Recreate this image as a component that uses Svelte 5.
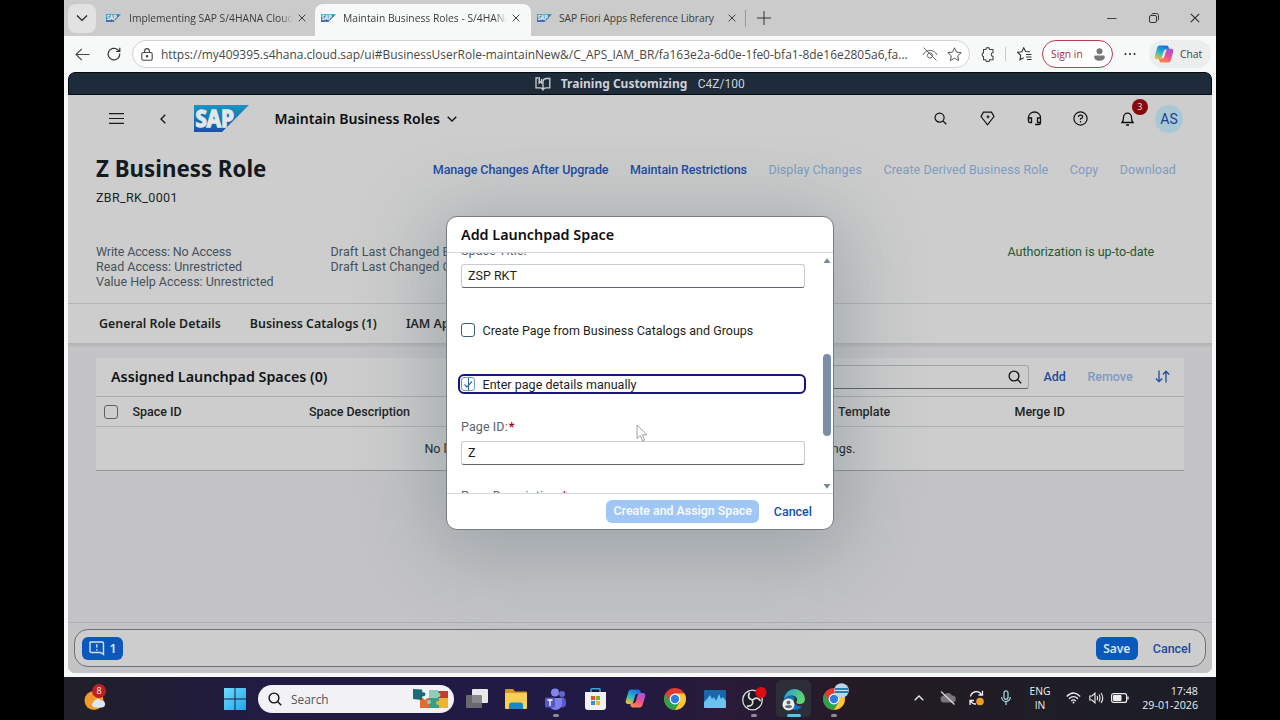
<script>
  const browserTabs = [
    { title: 'Implementing SAP S/4HANA Cloud', cls: 'first' },
    { title: 'Maintain Business Roles - S/4HANA', cls: 'active' },
    { title: 'SAP Fiori Apps Reference Library', cls: 'last' }
  ];
  const access = ['Write Access: No Access', 'Read Access: Unrestricted', 'Value Help Access: Unrestricted'];
  const links = [
    { t: 'Manage Changes After Upgrade', on: true },
    { t: 'Maintain Restrictions', on: true },
    { t: 'Display Changes', on: false },
    { t: 'Create Derived Business Role', on: false },
    { t: 'Copy', on: false },
    { t: 'Download', on: false }
  ];
</script>

{#snippet sapMark(w, h, id)}
  <svg width={w} height={h} viewBox="0 0 55 27" aria-label="SAP">
    <defs>
      <linearGradient id={id} x1="0" y1="0" x2="0" y2="1">
        <stop offset="0" stop-color="#1796c4" /><stop offset="1" stop-color="#1b52a8" />
      </linearGradient>
    </defs>
    <path d="M0 0H55L28 27H0Z" fill="url(#{id})" />
    <text class="saptext" x="1.500" y="21.500" textLength="38.500" lengthAdjust="spacingAndGlyphs">SAP</text>
  </svg>
{/snippet}

{#snippet cross(s)}
  <svg width={s} height={s} viewBox="0 0 10 10" fill="none" stroke="#2b2b2b" stroke-width="1.1"><path d="M.8.8l8.4 8.4M9.2.8L.8 9.2" /></svg>
{/snippet}

{#snippet lens(s, c, w)}
  <svg width={s} height={s} viewBox="0 0 14 14" fill="none" stroke={c} stroke-width={w}><circle cx="6" cy="6" r="4.9" /><path d="M9.6 9.6L13.2 13.2" /></svg>
{/snippet}

{#snippet chrome()}
  <svg width="22" height="22" viewBox="0 0 22 22">
    <circle cx="11" cy="11" r="11" fill="#e33b2e" />
    <path d="M1.5 5.5A11 11 0 0 0 11 22L15.8 13.8 11 11 6.2 13.8Z" fill="#2ba24c" />
    <path d="M11 22A11 11 0 0 0 20.5 5.5H11L15.8 13.8Z" fill="#fcc934" />
    <circle cx="11" cy="11" r="5.4" fill="#fff" /><circle cx="11" cy="11" r="4.2" fill="#2f7de1" />
  </svg>
{/snippet}

{#snippet copilot(s, id)}
  <svg width={s} height={s} viewBox="0 0 20 20">
    <defs>
      <linearGradient id="{id}a" x1=".6" y1="0" x2=".2" y2="1"><stop offset="0" stop-color="#1a6fe0" /><stop offset=".5" stop-color="#28b9c9" /><stop offset="1" stop-color="#f2c230" /></linearGradient>
      <linearGradient id="{id}b" x1=".8" y1="0" x2=".3" y2="1"><stop offset="0" stop-color="#9a55e8" /><stop offset=".5" stop-color="#ee4f8d" /><stop offset="1" stop-color="#fb8a45" /></linearGradient>
    </defs>
    <path d="M6 1.5h6.500c1.300 0 1.900.8 2.200 1.800l.6 2.200H12c-1.300 0-1.900.7-2.300 1.900L7.800 13.500c-.4 1.200-1 1.700-2.300 1.700H3C1.200 15.200.2 14 .8 12L3.200 3.800C3.700 2.200 4.600 1.500 6 1.500Z" fill="url(#{id}a)" />
    <path d="M14 18.500H7.500c-1.300 0-1.900-.8-2.200-1.800l-.6-2.200H8c1.300 0 1.900-.7 2.300-1.900l1.900-6.100c.4-1.200 1-1.700 2.300-1.700H17c1.800 0 2.800 1.200 2.200 3.200l-2.400 8.200c-.5 1.600-1.400 2.300-2.800 2.300Z" fill="url(#{id}b)" />
  </svg>
{/snippet}

<div class="screen">
  <div class="window">
    <div class="tabstrip">
      <div class="tabmenu"><svg width="12" height="8" viewBox="0 0 12 8" fill="none" stroke="#222" stroke-width="1.2"><path d="M1 1.500l5 5 5-5" /></svg></div>
      {#each browserTabs as tab, i}
        <div class="btab {tab.cls}">
          <span class="fav">{@render sapMark(15, 8, 'fav' + i)}</span>
          <span class="btitle">{tab.title}</span>
          {@render cross(8)}
        </div>
      {/each}
      <span class="sep"></span>
      <svg class="plus" width="14" height="14" viewBox="0 0 14 14" stroke="#333" stroke-width="1"><path d="M7 0v14M0 7h14" /></svg>
      <div class="winctl">
        <svg width="10" height="10" viewBox="0 0 10 10" stroke="#444"><path d="M0 5.500h9.500" /></svg>
        <svg width="10" height="10" viewBox="0 0 10 10" fill="none" stroke="#333"><rect x=".5" y="2.500" width="7" height="7" rx="1.500" /><path d="M2.500 1.200Q3 .5 4 .5H7.500Q9.500.5 9.500 2.500V6Q9.500 7 8.800 7.500" /></svg>
        {@render cross(10)}
      </div>
    </div>

    <div class="toolbar">
      <svg class="back" width="15" height="13" viewBox="0 0 15 13" fill="none" stroke="#444" stroke-width="1.100"><path d="M14.500 6.500H1M6.800.8L1 6.500l5.800 5.700" /></svg>
      <svg class="reload" width="14" height="14" viewBox="0 0 14 14" fill="none" stroke="#333" stroke-width="1.200"><path d="M12.700 6.500A5.800 5.800 0 1 1 10.800 2.800L12.600 4.400M12.800.8V4.500H9" /></svg>
      <div class="url">
        <svg width="12" height="13" viewBox="0 0 12 13" fill="none" stroke="#444" stroke-width="1.100"><rect x=".8" y="4.500" width="10.400" height="7.700" rx="1.500" /><path d="M3.600 4.300V3A2.400 2.400 0 0 1 8.400 3V4.300" /><circle cx="6" cy="8.300" r=".7" fill="#444" /></svg>
        <span class="address">https://my409395.s4hana.cloud.sap/ui#BusinessUserRole-maintainNew&amp;/C_APS_IAM_BR/fa163e2a-6d0e-1fe0-bfa1-8de16e2805a6,fa...</span>
        <svg width="16" height="14" viewBox="0 0 16 14" fill="none" stroke="#666" stroke-width="1"><path d="M1 8Q3 3.500 8 3.500T15 8" /><circle cx="8" cy="8.500" r="2.600" /><path d="M1.500.5L14.500 13.500" /></svg>
        <svg width="15" height="14" viewBox="0 0 15 14" fill="none" stroke="#555" stroke-width="1"><path d="M7.500.8l2 4.300 4.700.6-3.500 3.200.9 4.600-4.100-2.300-4.100 2.300.9-4.600L.8 5.700l4.700-.6z" /></svg>
      </div>
      <svg class="puzzle" width="14" height="15" viewBox="0 0 14 15" fill="none" stroke="#444" stroke-width="1.100"><path d="M2.500 2.500H4.800A1.900 1.900 0 0 1 8.600 2.500H12V5.800A1.800 1.800 0 0 0 12 9.400V12.800H8.600A1.900 1.900 0 0 1 4.800 12.800H2.500V9.600A1.900 1.900 0 0 1 2.500 5.900Z" /></svg>
      <span class="sep light"></span>
      <svg class="favs" width="15" height="14" viewBox="0 0 15 14" fill="none" stroke="#333" stroke-width="1.100"><path d="M13 4.800L8.600 4.500 6.700.8 4.800 4.700.7 5.300l3 3L3 12.700l3.700-2M9 7.500h5.500M9 10h5.500M10 12.500h4.500" /></svg>
      <div class="signin">Sign in<svg width="11" height="13" viewBox="0 0 11 13" fill="#777"><circle cx="5.500" cy="3.200" r="3" /><path d="M1.500 7.500h8a1.300 1.300 0 0 1 1.300 1.300C10.800 11.500 8.500 12.800 5.500 12.800S.2 11.500.2 8.800A1.300 1.300 0 0 1 1.500 7.500Z" /></svg></div>
      <svg class="dots" width="12" height="4" viewBox="0 0 12 4" fill="#222"><circle cx="1.500" cy="2" r="1" /><circle cx="6" cy="2" r="1" /><circle cx="10.500" cy="2" r="1" /></svg>
      <div class="chat">{@render copilot(20, 'tb')}Chat</div>
    </div>

    <div class="page">
      <div class="banner">
        <svg width="16" height="14" viewBox="0 0 16 14" fill="none" stroke="#c9ced3" stroke-width="1.300"><path d="M3 1H1V10.800H5.500Q7.300 10.800 8 12.800Q8.800 10.800 11 10.800H14.800V1.500H11.500Q8.300 1.500 8 4.500V12" /><path d="M4.200 0V6L5.400 5 6.600 6V2" stroke-width="1.500" /></svg>
        <b>Training Customizing</b><span>C4Z/100</span>
      </div>

      <div class="shell">
        <svg class="menu" width="15" height="11" viewBox="0 0 15 11" stroke="#1a1d20" stroke-width="1.200"><path d="M0 .7h15M0 5.500h15M0 10.300h15" /></svg>
        <svg class="prev" width="6" height="10" viewBox="0 0 6 10" fill="none" stroke="#111" stroke-width="1.300"><path d="M5.300.7L1 5l4.300 4.300" /></svg>
        {@render sapMark(55, 27, 'logo')}
        <span class="apptitle">Maintain Business Roles</span>
        <svg class="caret" width="10" height="6" viewBox="0 0 10 6" fill="none" stroke="#111" stroke-width="1.300"><path d="M.7.7L5 5 9.300.7" /></svg>
        <div class="actions">
          <span>{@render lens(13, '#111', 1.3)}</span>
          <span><svg width="15" height="15" viewBox="0 0 15 15" fill="none" stroke="#111" stroke-width="1.200"><path d="M3.500 1.200H11.500L14 5.500 7.500 13.800 1 5.500Z" /><path d="M8 3.500l.6 1.700 1.600.6-1.600.6-.6 1.500-.6-1.500-1.600-.6 1.600-.6z" fill="#111" stroke="none" /></svg></span>
          <span><svg width="15" height="15" viewBox="0 0 15 15" fill="none" stroke="#111" stroke-width="1.300"><path d="M1.500 9V6.500A6 5.500 0 0 1 13.500 6.500V11.500Q13.500 13.500 11.500 13.500H8" /><path d="M1.500 7H4.500V11.500H3Q1.500 11.500 1.500 10ZM13.500 7H10.500V11.500H13.500" /></svg></span>
          <span><svg width="15" height="15" viewBox="0 0 15 15" fill="none" stroke="#111" stroke-width="1.200"><circle cx="7.500" cy="7.500" r="6.600" /><path d="M5.400 6Q5.400 4.100 7.500 4.100T9.600 5.900Q9.600 7.300 7.500 7.700V8.800" /><path d="M7.500 10v1.500" /></svg></span>
          <span class="bell"><svg width="13" height="14" viewBox="0 0 13 14" fill="none" stroke="#111" stroke-width="1.300"><path d="M1 10.500Q2.500 9 2.500 5.500A4 4.300 0 0 1 10.500 5.500Q10.500 9 12 10.500Z" /><path d="M5 13h3" /></svg><i>3</i></span>
        </div>
        <div class="avatar">AS</div>
      </div>

      <div class="objhead">
        <div class="toprow">
          <h1>Z Business Role</h1>
          <div class="links">{#each links as l}<span class:off={!l.on}>{l.t}</span>{/each}</div>
        </div>
        <div class="objid">ZBR_RK_0001</div>
        <div class="facts">
          <div class="access">{#each access as a}<div>{a}</div>{/each}</div>
          <div class="draft"><div>Draft Last Changed By:</div><div>Draft Last Changed On:</div></div>
          <div class="auth">Authorization is up-to-date</div>
        </div>
      </div>

      <div class="anchors"><span>General Role Details</span><span>Business Catalogs (1)</span><span>IAM Apps</span></div>

      <div class="content">
        <div class="table">
          <div class="tbar">
            <h2>Assigned Launchpad Spaces (0)</h2>
            <div class="search">{@render lens(14, '#111', 1.3)}</div>
            <span class="add">Add</span><span class="remove">Remove</span>
            <svg width="15" height="13" viewBox="0 0 15 13" fill="none" stroke="#1d4ba3" stroke-width="1.300"><path d="M4 .5V11.500M.8 8.500L4 11.700 7.200 8.500M11 12.500V1.500M7.900 4.500L11 1.300 14.200 4.500" /></svg>
          </div>
          <div class="thead"><i class="box"></i><span>Space ID</span><span>Space Description</span><span>Template</span><span>Merge ID</span></div>
          <div class="empty"><span>No launchpad spaces assigned. Add spaces or adjust filter or search settings.</span></div>
        </div>
      </div>

      <div class="footwrap">
        <div class="footer">
          <div class="msg"><svg width="16" height="15" viewBox="0 0 16 15" fill="none" stroke="#d5e2f2" stroke-width="1.400"><path d="M1.700 1H13A1.500 1.500 0 0 1 14.500 2.500V13.500L11.500 11.500H2.500A1.500 1.500 0 0 1 1 10V2A1 1 0 0 1 1.700 1Z" /><path d="M7.800 3.300v3.200M7.800 8v1.500" /></svg>1</div>
          <div class="save">Save</div><span class="fcancel">Cancel</span>
        </div>
      </div>

      <div class="dialog">
        <header>Add Launchpad Space</header>
        <div class="body">
          <div class="form">
            <label class="l1" for="title">Space Title:</label>
            <div class="input">ZSP RKT</div>
            <div class="check"><i class="box blue"></i>Create Page from Business Catalogs and Groups</div>
            <div class="check focus"><i class="box blue"><svg width="12" height="12" viewBox="0 0 12 12" fill="none" stroke="#2a66b3" stroke-width="1.200"><path d="M2.500 6.500L5 9 10 3.500" /><path d="M6.500-1V13" stroke-width="1" /></svg></i>Enter page details manually</div>
            <label class="l2" for="pid">Page ID:<b>*</b></label>
            <div class="input">Z</div>
            <label class="l3" for="pd">Page Description:<b>*</b></label>
          </div>
          <div class="scroll">
            <svg width="8" height="6" viewBox="0 0 8 6" fill="#7588a0"><path d="M4 .3L7.500 5H.5Z" /></svg>
            <i></i>
            <svg width="8" height="6" viewBox="0 0 8 6" fill="#7588a0"><path d="M4 5.700L7.500 1H.5Z" /></svg>
          </div>
        </div>
        <footer><div class="create">Create and Assign Space</div><span>Cancel</span></footer>
      </div>
      <svg class="pointer" width="13" height="18" viewBox="0 0 13 18" fill="#fff" stroke="#888" stroke-width=".8"><path d="M1 1V14.500L4.300 11.400 6.500 16.800 8.600 16 6.400 10.800H11Z" /></svg>
    </div>
  </div>

  <div class="taskbar">
    <div class="weather"><svg width="24" height="26" viewBox="0 0 24 26"><circle cx="10" cy="14.500" r="9.500" fill="#f29a2a" /><path d="M10 21.500a3.300 3.300 0 0 1 0-6 4 4 0 0 1 7-1 3.500 3.500 0 0 1 1 7Z" fill="#dfe8f8" /></svg><i>8</i></div>
    <svg class="start" width="22" height="22" viewBox="0 0 22 22"><defs><linearGradient id="win" x1="0" y1="0" x2="1" y2="1"><stop offset="0" stop-color="#6fdcfb" /><stop offset="1" stop-color="#1fa4ec" /></linearGradient></defs><path fill="url(#win)" d="M0 0h10.500v10.500H0zM11.500 0H22v10.500H11.500zM0 11.500h10.500V22H0zM11.500 11.500H22V22H11.500z" /></svg>
    <div class="tsearch">
      {@render lens(14, '#111', 1.4)}<span>Search</span>
      <svg width="37" height="21" viewBox="0 0 37 21"><path d="M8 10h10v10H8z" fill="#e06b35" /><path d="M17 3h10v17H17z" fill="#3b9b8c" /><path d="M17 2h9v8h-9z" fill="#8fd0b4" /><path d="M27 3h9v9h-9z" fill="#c33e2a" /><path d="M27 10h9v10h-9z" fill="#edb431" /><path d="M1 1l9 .5.5 3a2 2 0 1 1 0 3.500L9.500 12 1 11z" fill="#1b6a78" /><circle cx="17" cy="14" r="2" fill="#8fd0b4" /><circle cx="26.500" cy="7" r="2" fill="#8fd0b4" /><circle cx="26" cy="15" r="2" fill="#edb431" /><circle cx="13" cy="10" r="1.800" fill="#f3f3f7" /></svg>
    </div>
    <div class="apps">
      <span><svg width="22" height="20" viewBox="0 0 22 20"><rect x="6" y="0" width="16" height="14" rx="1" fill="#e9e9ea" /><rect x="0" y="6" width="16" height="13" rx="1" fill="#777" opacity=".85" /></svg></span>
      <span><svg width="22" height="20" viewBox="0 0 22 20"><path d="M0 1Q0 0 1 0H8L10 2.500H21Q22 2.500 22 3.500V8H0Z" fill="#d9962a" /><rect x="0" y="4" width="22" height="16" rx="1" fill="#f8cf56" /><path d="M4 20V16Q4 13.500 6.500 13.500H15.500Q18 13.500 18 16V20Z" fill="#1687c9" /></svg></span>
      <span class="run"><svg width="22" height="22" viewBox="0 0 22 22"><circle cx="17" cy="6" r="3" fill="#6264d8" /><circle cx="10" cy="4.500" r="4" fill="#8286ee" /><rect x="13" y="9.500" width="8" height="10" rx="4" fill="#565ad0" /><path d="M4 10H17V16A6.500 6 0 0 1 4 16Z" fill="#7b80ee" /><rect x="0" y="9.500" width="10" height="10" rx="1.500" fill="#5457c4" /><path d="M2.500 12h5M5 12v6" stroke="#fff" stroke-width="1.300" /></svg></span>
      <span><svg width="21" height="22" viewBox="0 0 21 22"><path d="M6 5V1.500Q6 .8 6.800.8H14.200Q15 .8 15 1.500V5" fill="none" stroke="#38a5dc" stroke-width="1.500" /><path d="M0 4H21V19Q21 22 18 22H3Q0 22 0 19Z" fill="#f1f1f3" /><path d="M6 8h4v4H6z" fill="#e45335" /><path d="M11 8h4v4h-4z" fill="#78b72c" /><path d="M6 13h4v4H6z" fill="#2795dd" /><path d="M11 13h4v4h-4z" fill="#f4b52c" /></svg></span>
      <span>{@render copilot(21, 'tk')}</span>
      <span>{@render chrome()}</span>
      <span><svg width="22" height="18" viewBox="0 0 22 18"><rect width="22" height="18" rx="1" fill="#1668ab" /><path d="M0 12L3 9 6 5 8 9 10 7 12 11 15 4 17 9 19 7 22 11V17Q22 18 21 18H1Q0 18 0 17Z" fill="#6bc4ef" /></svg></span>
      <span class="run"><svg width="26" height="24" viewBox="0 0 26 24"><circle cx="11.500" cy="13" r="9.800" fill="#1d1b25" stroke="#ddd" stroke-width="1.300" /><path d="M11.500 13Q5.500 11.500 8.500 5.500M11.500 13Q16 8.700 19.700 14M11.500 13Q13 19.500 6 19" fill="none" stroke="#ddd" stroke-width="1.700" /><circle cx="20" cy="5.500" r="5.500" fill="#e30b13" /></svg></span>
      <span class="current"><svg width="24" height="24" viewBox="0 0 24 24"><defs><linearGradient id="edge" x1="0" y1="0" x2="1" y2=".3"><stop offset="0" stop-color="#219ee0" /><stop offset="1" stop-color="#5fd66b" /></linearGradient></defs><path d="M2 13A10.500 10.500 0 0 1 23 12Q23 17 17.500 17 13 17 15 13.500 15.500 9 10 8.500 4 8.500 2 13Z" fill="url(#edge)" /><path d="M2 13Q4 8.500 9.500 9 14 9.500 12 13 11 19 20 19.500 16 24 10 22.500 3 20 2 13Z" fill="#1470c4" /><circle cx="6.500" cy="17.500" r="6" fill="#efefef" /><circle cx="6.500" cy="15.500" r="2" fill="#666" /><path d="M3 20Q3 18.300 4.500 18.300H8.500Q10 18.300 10 20Q8.500 21.300 6.500 21.300T3 20Z" fill="#666" /></svg></span>
      <span class="run">{@render chrome()}<svg class="globe" width="15" height="15" viewBox="0 0 15 15"><circle cx="7.500" cy="7.500" r="7.300" fill="#b8d6e8" /><path d="M1 5h13v5H1z" fill="#287fa8" /><path d="M1 7.500h13" stroke="#cfe6f2" /></svg></span>
    </div>
    <div class="tray">
      <span class="t1"><svg width="10" height="6" viewBox="0 0 10 6" fill="none" stroke="#eee" stroke-width="1.300"><path d="M.7 5.300L5 1l4.300 4.300" /></svg></span>
      <span class="t2"><svg width="16" height="14" viewBox="0 0 16 14"><path d="M4 11.500a3.500 3.500 0 0 1 0-7 4.500 4.500 0 0 1 8 0 3.500 3.500 0 0 1 .5 7Z" fill="#77777b" /><path d="M1 .5L14.500 13.500" stroke="#ddd" stroke-width="1.200" /></svg></span>
      <span class="t3"><svg width="16" height="16" viewBox="0 0 16 16" fill="none" stroke="#eee" stroke-width="1.300"><path d="M1.500 6.500A6 6 0 0 1 12.500 4.500M13.500.8V5H9.500M1 15V10.500H5M1.500 11A6 6 0 0 0 7 14" /><circle cx="11" cy="11.500" r="3.800" fill="#f39c26" stroke="none" /></svg></span>
      <span class="t4"><svg width="10" height="16" viewBox="0 0 10 16" fill="none" stroke="#a6dfe8" stroke-width="1.200"><rect x="3" y=".8" width="4" height="8.500" rx="2" /><path d="M.7 7A4.300 4.500 0 0 0 9.300 7M5 11.500V15" /></svg></span>
      <div class="lang">ENG<br />IN</div>
      <span class="t5"><svg width="15" height="12" viewBox="0 0 15 12" fill="none" stroke="#eee" stroke-width="1.300"><path d="M.8 4.500Q7.500-2.500 14.200 4.500M3 6.800Q7.500 2.300 12 6.800M5.200 9Q7.500 6.800 9.800 9" /><circle cx="7.500" cy="10.500" r="1" fill="#eee" stroke="none" /></svg></span>
      <span class="t6"><svg width="15" height="12" viewBox="0 0 15 12" fill="none" stroke="#eee" stroke-width="1.100"><path d="M.8 4H3L6 1.200V10.800L3 8H.8ZM8 4Q9.200 6 8 8M10 2.500Q12 6 10 9.500M12 1Q15.500 6 12 11" /></svg></span>
      <span class="t7"><svg width="18" height="10" viewBox="0 0 18 10"><rect x=".6" y=".6" width="15" height="8.800" rx="2" fill="none" stroke="#eee" stroke-width="1.200" /><rect x="2" y="2" width="8.500" height="6" rx="1" fill="#eee" /><path d="M17 3.500v3" stroke="#eee" stroke-width="1.300" /></svg></span>
      <div class="clock">17:48<br />29-01-2026</div>
    </div>
  </div>
</div>

<style>
  :global(body) { margin: 0; background: #000; }
  * { box-sizing: border-box; }
  svg { display: block; flex: none; }
  i { font-style: normal; }
  .screen { width: 1280px; height: 720px; padding: 0 64px; background: #000; overflow: hidden; display: flex; flex-direction: column; font: 12.5px Roboto, sans-serif; color: #1c1f22; white-space: nowrap; }
  .window { height: 677px; background: #f7f8f8; display: flex; flex-direction: column; font-family: Roboto, sans-serif; }
  .saptext { font: 700 22.500px "Open Sans", sans-serif; fill: #e4e6e8; stroke: #e4e6e8; stroke-width: 1.400px; }

  .tabstrip { height: 36px; background: #cbcbcb; display: flex; align-items: center; padding-left: 4px; font: 10.3px "Open Sans", sans-serif; color: #3c3c3c; }
  .tabmenu { width: 28px; height: 29px; border-radius: 8px; background: #e2e2e2; display: grid; place-items: center; }
  .btab { display: flex; align-items: center; height: 32px; align-self: flex-end; padding-left: 6px; padding-bottom: 4px; }
  .btab.first { width: 219px; padding-left: 10px; }
  .btab.active { width: 216px; background: #f7f8f8; border-radius: 8px 8px 0 0; }
  .btab.last { width: 214px; }
  .fav { width: 22px; }
  .btitle { overflow: hidden; width: 164px; margin-right: 5px; }
  .first .btitle { margin-left: 1px; }
  .first .btitle, .active .btitle { mask-image: linear-gradient(90deg, #000 92%, transparent); }
  .last .btitle { width: 168px; letter-spacing: -.03px; }
  .btab.last .btitle { margin-right: 1px; }
  .sep { width: 1px; height: 17px; background: #999; }
  .plus { margin-left: 11px; }
  .winctl { margin-left: auto; display: flex; gap: 31.500px; padding-right: 16px; }

  .toolbar { height: 36px; display: flex; align-items: center; padding-left: 11px; color: #444; font: 10.5px "Open Sans", sans-serif; }
  .reload { margin-left: 17px; }
  .url { width: 838px; height: 28px; border: 1px solid #d0d2d3; border-radius: 14px; background: #fff; margin-left: 11px; display: flex; align-items: center; padding-left: 8px; }
  .address { width: 761px; margin-left: 8px; font-size: 11.960px; color: #484848; }
  .url svg:last-child { margin-left: 9px; }
  .puzzle { margin: 0 10px 0 11px; }
  .sep.light { height: 14px; background: #ccc; }
  .favs { margin: 0 10px 0 11px; }
  .signin { width: 71px; height: 28px; border: 1px solid #b83c4e; border-radius: 14px; color: #b3283c; background: #fff; display: flex; align-items: center; justify-content: space-between; padding: 0 7px 0 8px; font-size: 10.300px; }
  .dots { margin: 0 13px 0 11px; }
  .chat { width: 62px; height: 28px; border-radius: 14px; background: #ebeeec; display: flex; align-items: center; gap: 6px; padding-left: 5px; font-size: 10.300px; }

  .page { position: relative; width: 1144px; height: 601px; margin-left: 4px; border-radius: 7px; background: #cdcdcd; overflow: hidden; display: flex; flex-direction: column; }
  .page > * { flex-shrink: 0; }
  .banner { height: 23px; background: #1d2b3b; border: 1px solid #060b12; border-radius: 7px 7px 0 0; color: #cdd1d5; display: flex; align-items: center; justify-content: center; }
  .banner b { font: 700 12px "Noto Sans", sans-serif; margin: 0 10.500px 0 9.500px; }
  .banner span { font-size: 12px; padding-top: 1px; }

  .shell { height: 48px; display: flex; align-items: center; padding: 0 0 1px 41px; }
  .prev { margin: 0 28px 0 36px; }
  .apptitle { font: 600 14.050px "Noto Sans", sans-serif; width: 166px; margin: 0 6.500px 0 25.500px; color: #0b0d10; }
  .actions { margin-left: auto; display: flex; }
  .actions span { width: 46.800px; display: grid; place-items: center; }
  .bell { position: relative; }
  .bell i { position: absolute; top: -12px; left: 27.500px; width: 16px; height: 16px; border-radius: 50%; background: #86090d; color: #ddd; font: 9px/16px "Noto Sans", sans-serif; text-align: center; }
  .avatar { width: 28px; height: 28px; margin: 0 29px 0 4px; border-radius: 50%; background: #a9c8d5; color: #1b3f94; font-size: 14px; line-height: 28px; text-align: center; }

  .objhead { height: 161px; padding-left: 28px; border-bottom: 1px solid #b3b5b7; }
  .toprow { display: flex; align-items: center; justify-content: space-between; height: 51px; padding-right: 36px; }
  h1 { margin: 0; font: 700 22.300px "Noto Sans", sans-serif; color: #131a20; }
  .links { display: flex; gap: 21.500px; color: #1d4aa3; font-weight: 500; letter-spacing: -.1px; margin-top: 1px; }
  .links .off { color: #7d9cc2; font-weight: 400; letter-spacing: .08px; }
  .objid { height: 24px; line-height: 14px; margin-top: -3px; letter-spacing: .35px; }
  .facts { display: flex; margin-top: 29px; color: #46515c; line-height: 15.200px; }
  .access { width: 234.500px; }
  .access div:first-child { letter-spacing: -.15px; }
  .draft { width: 677px; letter-spacing: .1px; }
  .auth { color: #26592f; margin-top: -.5px; }

  .anchors { height: 40px; padding-left: 31px; display: flex; align-items: center; gap: 29px; font: 600 12.400px "Noto Sans", sans-serif; border-bottom: 1px solid #b2b4b6; }
  .content { height: 279px; background: #c4c4c6; padding: 14px 28px 0; border-bottom: 1px solid #afb1b3; box-shadow: inset 0 3px 3px -1px rgba(0,0,0,.08); }
  .table { background: #cdcdcd; height: 113px; border-bottom: 1px solid #8f9396; }
  .tbar { height: 39px; display: flex; align-items: center; padding: 0 0 1px 15px; border-bottom: 1px solid #a9acae; font-weight: 500; color: #1d4aa3; }
  h2 { margin: 0; font: 600 14.300px "Noto Sans", sans-serif; color: #101316; width: 440px; }
  .search { width: 478px; height: 24px; border: 1px solid #a0a4a8; border-bottom-color: #5c6268; border-radius: 3px; display: flex; align-items: center; justify-content: flex-end; padding-right: 6px; }
  .add { margin: 0 21.500px 0 14.500px; }
  .remove { color: #7b9bc4; margin-right: 22px; }
  .thead { height: 30px; border-bottom: 1px solid #aeb1b3; display: grid; grid-template-columns: 36.500px 176.500px 529px 176.500px auto; align-items: center; font-weight: 500; letter-spacing: -.03px; }
  .thead .box { margin-left: 8px; }
  .box { width: 14px; height: 14px; border: 1px solid #5b6268; border-radius: 3px; flex: none; display: block; }
  .empty { height: 43px; display: flex; align-items: center; justify-content: center; }
  .footwrap { height: 50px; padding: 6px; background: #c4c4c6; }
  .footer { height: 38px; border: 1px solid #6c7074; border-radius: 14px; background: #cdcdcd; display: flex; align-items: center; padding: 0 14px 0 7px; font: 600 12.100px "Noto Sans", sans-serif; color: #1d4aa3; }
  .msg, .save { height: 23px; background: #0b58bd; color: #dbe5f1; border-radius: 6px; display: flex; align-items: center; justify-content: center; }
  .msg { width: 41px; gap: 5px; }
  .save { width: 42px; margin: 0 15px 0 auto; font-size: 12px; }
  .fcancel { font: 500 12.500px Roboto, sans-serif; }

  .dialog { position: absolute; left: 378px; top: 144px; width: 388px; height: 314px; border: 1px solid #777d82; border-radius: 11px; background: #fff; box-shadow: 0 12px 80px 14px rgba(70, 95, 105, .32); display: flex; flex-direction: column; }
  .dialog header { height: 36px; padding-left: 14px; border-bottom: 1px solid #d2d4d6; font: 600 14.350px/36px "Noto Sans", sans-serif; color: #0c0f12; }
  .body { height: 240px; overflow: hidden; display: flex; padding-left: 14px; }
  .form { width: 344px; display: flex; flex-direction: column; margin-top: -10px; }
  label { color: #58636f; font-size: 12.500px; letter-spacing: .1px; line-height: 16px; }
  label b { color: #a3001c; margin-left: 1px; }
  .l1 { height: 21px; flex: none; }
  .input { height: 24px; flex: none; border: 1px solid #c8ccd0; border-bottom-color: #5f666d; border-radius: 3px; padding-left: 6px; line-height: 22px; }
  .check { height: 20px; flex: none; display: flex; align-items: center; gap: 7.500px; margin: 32px 0 0; }
  .box.blue { border-color: #3f5f80; }
  .check.focus { margin: 34px 0 0 -3px; width: 348px; border: 2px solid #1a117a; border-radius: 6px; padding-left: 1px; letter-spacing: .03px; }
  .focus .box { overflow: hidden; border-color: #6c9cc8; }
  .l2 { margin-top: 25px; height: 22px; flex: none; }
  .l3 { margin-top: 23px; flex: none; }
  .scroll { width: 8px; margin-left: 18px; display: flex; flex-direction: column; align-items: center; padding: 5px 0 4px; }
  .scroll i { width: 8px; height: 82px; border-radius: 4px; background: #7b8ea6; margin: 90px 0 auto; }
  .dialog footer { flex: 1; border-top: 1px solid #d5d7d9; display: flex; align-items: center; justify-content: flex-end; padding-right: 21px; color: #1252a8; font-weight: 500; }
  .create { width: 153px; height: 23px; border-radius: 6px; background: #9fc6f5; color: #f6fafe; text-align: center; font-weight: 600; font-size: 12.350px; line-height: 23px; margin-right: 14.500px; }
  .pointer { position: absolute; left: 568px; top: 352px; }

  .taskbar { height: 43px; background: linear-gradient(90deg, #202028 0, #221b42 16%, #201a45 45%, #291a38 58%, #231b23 70%, #1e1e28 90%, #1a1c26 100%); display: flex; align-items: center; color: #eee; }
  .weather { position: relative; width: 24px; margin-left: 20px; }
  .weather i { position: absolute; left: 8px; top: -2px; width: 14px; height: 14px; border-radius: 50%; background: #bd2020; font: 9px/14px "Open Sans", sans-serif; text-align: center; }
  .start { margin: 0 13px 0 116px; }
  .tsearch { width: 196px; height: 28px; border-radius: 14px; background: #f1f1f6; margin-left: -1px; display: flex; align-items: center; padding-left: 10px; color: #555; font: 11.900px "Open Sans", sans-serif; }
  .tsearch span { margin: 0 auto 0 9px; }
  .tsearch svg:last-child { margin-right: 5px; }
  .apps { display: flex; margin-left: 3px; height: 43px; align-items: center; }
  .apps span { width: 39.650px; height: 37px; display: grid; place-items: center; position: relative; }
  .apps .run::after, .apps .current::after { content: ""; position: absolute; bottom: 0; left: 17px; width: 6px; height: 3px; border-radius: 2px; background: #92889a; }
  .apps .current { background: #2d2e37; border-radius: 5px; width: 35px; margin: 0 2.300px; }
  .apps .current::after { width: 14px; left: 10.500px; background: #62bfe8; }
  .globe { position: absolute; right: 4px; top: 3px; }
  .tray { margin-left: auto; display: flex; align-items: center; padding: 0 18px 1px 0; text-align: center; }
  .tray span { display: grid; place-items: center; width: 29px; }
  .lang { width: 40px; font: 10.300px/14px "Open Sans", sans-serif; }
  .tray .t5 { width: 26px; } .tray .t6 { width: 20px; } .tray .t7 { width: 27px; }
  .clock { width: 65px; text-align: right; font: 10.700px/14px "Open Sans", sans-serif; }
</style>
